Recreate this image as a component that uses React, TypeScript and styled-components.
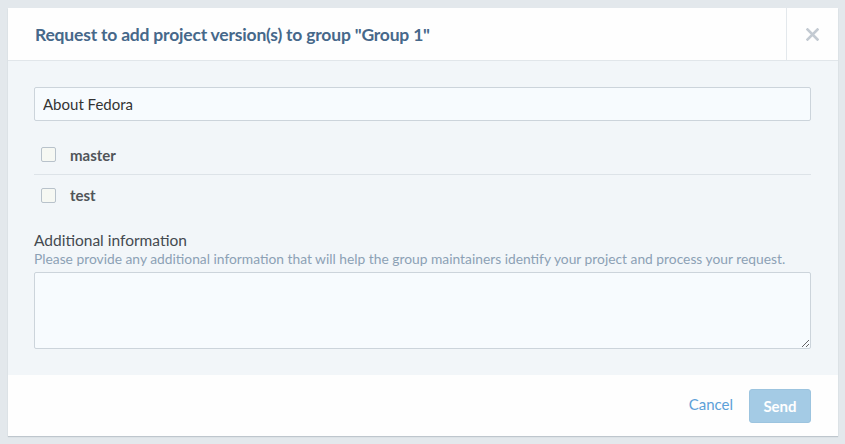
import React from 'react';
import styled, { createGlobalStyle } from 'styled-components';

const GlobalStyle = createGlobalStyle`
  html, body {
    margin: 0;
    padding: 0;
  }
  body {
    background: #e3e8ec;
    padding: 8px;
    font-family: 'Lato', 'Liberation Sans', sans-serif;
  }
  * {
    box-sizing: border-box;
  }
`;

const Modal = styled.div`
  width: 830px;
  background: #fefefe;
  box-shadow: 0 1px 1px rgba(120, 135, 150, 0.35);
`;

const Header = styled.div`
  display: flex;
  align-items: stretch;
  height: 53px;
  border-bottom: 1px solid #e1e6ea;
`;

const Title = styled.h4`
  flex: 1;
  margin: 0;
  padding: 0 0 0 27px;
  display: flex;
  align-items: center;
  font-size: 17.5px;
  font-weight: 700;
  color: #46688a;
  letter-spacing: -0.2px;
`;

const CloseButton = styled.button`
  width: 52px;
  border: none;
  border-left: 1px solid #e3e8ec;
  background: transparent;
  display: flex;
  align-items: center;
  justify-content: center;
  padding: 0;
  cursor: pointer;
`;

const Body = styled.div`
  background: #f2f6f9;
  padding: 26px 27px 26px 26px;
`;

const TextInput = styled.input`
  display: block;
  width: 100%;
  height: 34px;
  border: 1px solid #ccd4db;
  border-radius: 2px;
  background: #f7fbfe;
  padding: 0 8px;
  font-family: inherit;
  font-size: 15px;
  color: #333;
`;

const VersionList = styled.div`
  margin-top: 14px;
`;

const VersionRow = styled.label<{ $divider?: boolean }>`
  display: flex;
  align-items: center;
  height: 40px;
  padding-left: 7px;
  border-bottom: ${(p) => (p.$divider ? '1px solid #dde3e8' : 'none')};
  cursor: pointer;
`;

const Box = styled.span`
  width: 15px;
  height: 15px;
  border: 1px solid #b8c2cb;
  border-radius: 2px;
  background: #f6f8f3;
  flex-shrink: 0;
`;

const VersionName = styled.span`
  margin-left: 14px;
  font-size: 15px;
  font-weight: 700;
  color: #505458;
`;

const Field = styled.div`
  margin-top: 16px;
`;

const FieldLabel = styled.div`
  font-size: 15.5px;
  color: #444a50;
  line-height: 19px;
`;

const HelpText = styled.div`
  font-size: 13.8px;
  color: #8ca1b5;
  line-height: 18px;
  margin-bottom: 4px;
`;

const TextArea = styled.textarea`
  display: block;
  width: 100%;
  height: 77px;
  border: 1px solid #ccd4db;
  border-radius: 2px;
  background: #f7fbfe;
  font-family: inherit;
  font-size: 15px;
  padding: 6px 8px;
  resize: vertical;
`;

const Footer = styled.div`
  display: flex;
  justify-content: flex-end;
  align-items: center;
  gap: 16px;
  height: 61px;
  padding: 0 27px;
`;

const CancelLink = styled.a`
  font-size: 15px;
  color: #5ca0d8;
  text-decoration: none;
  cursor: pointer;
  margin-top: -3px;
`;

const SendButton = styled.button`
  width: 62px;
  height: 34px;
  border: 1px solid #9cc4df;
  border-radius: 3px;
  background: #a4cbe5;
  color: #fff;
  font-family: inherit;
  font-size: 15px;
  font-weight: 700;
  padding: 0;
`;

const versions = ['master', 'test'];

export default function App() {
  return (
    <>
      <GlobalStyle />
      <Modal>
        <Header>
          <Title>Request to add project version(s) to group "Group 1"</Title>
          <CloseButton aria-label="Close">
            <svg width="13" height="13" viewBox="0 0 13 13">
              <path d="M1.5 1.5 L11.5 11.5 M11.5 1.5 L1.5 11.5" stroke="#c3cad2" strokeWidth="2.6" strokeLinecap="square" />
            </svg>
          </CloseButton>
        </Header>
        <Body>
          <TextInput defaultValue="About Fedora" />
          <VersionList>
            {versions.map((v, i) => (
              <VersionRow key={v} $divider={i < versions.length - 1}>
                <Box />
                <VersionName>{v}</VersionName>
              </VersionRow>
            ))}
          </VersionList>
          <Field>
            <FieldLabel>Additional information</FieldLabel>
            <HelpText>
              Please provide any additional information that will help the group maintainers identify your project and process your request.
            </HelpText>
            <TextArea />
          </Field>
        </Body>
        <Footer>
          <CancelLink>Cancel</CancelLink>
          <SendButton disabled>Send</SendButton>
        </Footer>
      </Modal>
    </>
  );
}
